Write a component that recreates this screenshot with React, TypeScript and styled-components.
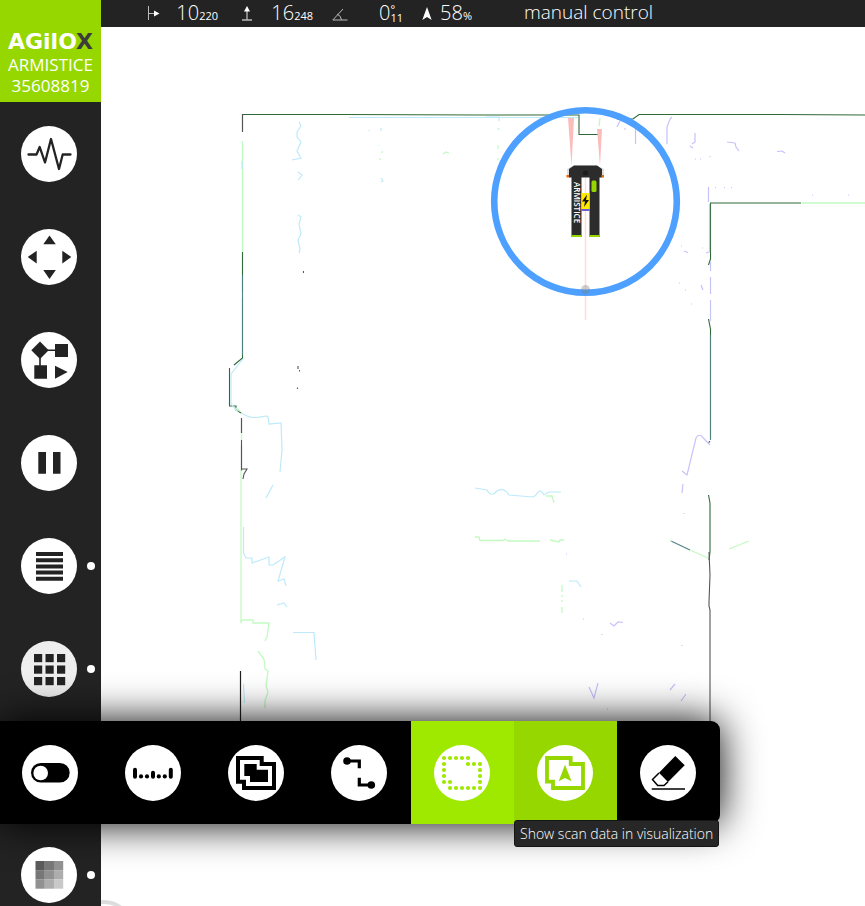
import React from "react";
import styled, { createGlobalStyle } from "styled-components";

const GlobalStyle = createGlobalStyle`
  * { box-sizing: border-box; }
  body { margin: 0; background: #fff; font-family: "Open Sans", "Noto Sans", sans-serif; }
`;

const green = "#96d700";
const dark = "#232323";

const Shell = styled.div`
  display: grid;
  grid-template-columns: 101px 1fr;
  height: 100vh;
  overflow: hidden;
`;

const Sidebar = styled.nav`
  position: relative;
  z-index: 1;
  background: ${dark};
`;

const Brand = styled.header`
  display: flex;
  flex-direction: column;
  align-items: center;
  justify-content: flex-end;
  height: 102px;
  padding-bottom: 6px;
  background: ${green};
  color: #fff;
  font-size: 17px;
  line-height: 21px;
  white-space: nowrap;
`;

const Logo = styled.div`
  font-family: "DejaVu Sans", sans-serif;
  font-weight: 700;
  font-size: 22px;
  line-height: 24px;
`;

const LogoEnd = styled.span`
  color: #3c3c3b;
`;

const Slot = styled.div`
  position: relative;
  display: flex;
  align-items: center;
  gap: 10px;
  height: 103px;
  padding-left: 21px;
`;

const RoundButton = styled.button<{ $pressed?: boolean }>`
  display: block;
  flex: none;
  width: 56px;
  height: 56px;
  padding: 0;
  border: 0;
  border-radius: 50%;
  background: ${(p) => (p.$pressed ? "#eee" : "#fff")};
  color: ${dark};
  cursor: pointer;
`;

const Dot = styled.span`
  width: 8px;
  height: 8px;
  border-radius: 50%;
  background: #fff;
`;

const Flyout = styled.div`
  position: absolute;
  top: 1px;
  left: -1px;
  display: flex;
  border-radius: 0 9px 9px 0;
  background: #000;
  box-shadow: 0 0 40px #000;
`;

const FlyoutItem = styled.div<{ $bg?: string }>`
  position: relative;
  display: flex;
  align-items: center;
  width: 103px;
  height: 103px;
  padding-left: 23px;
  background: ${(p) => p.$bg || "transparent"};
  ${RoundButton} { color: ${(p) => p.$bg || "#000"}; }
`;

const Tooltip = styled.div`
  position: absolute;
  top: 99px;
  left: 0;
  z-index: 2;
  padding: 3px 5px;
  border: 1px solid #151515;
  border-radius: 3px;
  background: #272727;
  color: #fff;
  font-weight: 300;
  font-size: 14px;
  line-height: 19px;
  white-space: nowrap;
`;

const Main = styled.main`
  display: flex;
  flex-direction: column;
  min-width: 0;
  min-height: 0;
`;

const StatusBar = styled.div`
  display: grid;
  grid-template-columns: 95px 95px 90px 69px 1fr;
  height: 27px;
  padding-left: 22px;
  background: ${dark};
  color: #fff;
  font-weight: 300;
  font-size: 20px;
  line-height: 26px;
  white-space: nowrap;
`;

const Reading = styled.div<{ $indent: number }>`
  display: flex;
  justify-content: space-between;
  padding-left: ${(p) => p.$indent}px;
`;

const Value = styled.div`
  display: flex;
`;

const Minor = styled.span`
  padding-top: 3px;
  font-weight: 400;
  font-size: 11px;
`;

const Degrees = styled.span`
  display: flex;
  flex-direction: column;
  font-weight: 400;
  font-size: 11px;
  line-height: 9px;
  padding-top: 4px;
`;

const Mode = styled.div`
  padding-left: 52px;
  font-size: 19px;
  line-height: 25px;
`;

const MapCanvas = styled.svg`
  display: block;
  flex: 1;
  width: 100%;
  min-height: 0;
  background: #fff;
`;

const Icon = ({ children }: { children: React.ReactNode }) => (
  <svg width="56" height="56" viewBox="0 0 56 56" fill="currentColor" aria-hidden="true">
    {children}
  </svg>
);

const mapOutline = "M10 13H33.7V19H46V43H16V36.7H10Z";
const dots = [
  [10, 13], [16, 13], [22, 13], [28, 13], [34, 13], [34, 19], [40, 19], [46, 19], [46, 25], [46, 31], [46, 37], [46, 43],
  [40, 43], [34, 43], [28, 43], [22, 43], [16, 43], [16, 37], [10, 37], [10, 31], [10, 25], [10, 19],
];
const shades = ["#5a5a5a", "#777", "#919191", "#777", "#919191", "#adadad", "#919191", "#adadad", "#c9c9c9"];

const icons = {
  pulse: <path d="M7.5 28.5H15.5L18.7 21L24 36.5L30 13L38 43L41.7 28.5H49.5" fill="none" stroke="currentColor" strokeWidth="2.3" strokeLinejoin="round" strokeLinecap="round" />,
  move: <path d="M28.5 6.5L34.8 15.3H22.3ZM22.3 41H34.8L28.5 50ZM6.7 28L15.7 21.7V34.5ZM41.3 21.7V34.5L50.3 28Z" />,
  flow: (
    <>
      <path d="M19 18.3H40M19 18.3V40" stroke="currentColor" strokeWidth="1.6" />
      <path d="M19 9.6L27.7 18.3L19 27L10.3 18.3ZM34 12H47V25H34ZM13.3 33.3H26V46.7H13.3ZM34 33.7L46.7 40L34 46.7Z" />
    </>
  ),
  pause: <path d="M17.3 17H25V38.7H17.3ZM32 17H39.5V38.7H32Z" />,
  list: <path d="M15 14H42V18H15ZM15 20.2H42V24.2H15ZM15 26.4H42V30.4H15ZM15 32.6H42V36.6H15ZM15 38.8H42V42.8H15Z" />,
  grid: <>{[13, 24.5, 36].map((y) => [13, 24.5, 36].map((x) => <rect key={`${x}-${y}`} x={x} y={y} width="8.2" height="8.2" />))}</>,
  shades: <>{shades.map((c, i) => <rect key={i} x={14.5 + (i % 3) * 9.2} y={14 + Math.floor(i / 3) * 9.2} width="9.3" height="9.3" fill={c} />)}</>,
  toggle: (
    <>
      <rect x="9" y="18" width="38.7" height="19.6" rx="9.8" />
      <circle cx="18.7" cy="28" r="7.3" fill="#fff" />
    </>
  ),
  level: (
    <>
      <rect x="8" y="22.7" width="4" height="11" rx="2" />
      <rect x="26" y="25.7" width="4" height="8" rx="2" />
      <rect x="43.8" y="22.7" width="4" height="11" rx="2" />
      {[16, 22, 33.8, 39.8].map((x) => <circle key={x} cx={x} cy="31.4" r="2.1" />)}
    </>
  ),
  maps: (
    <>
      <path d={mapOutline} fill="none" stroke="currentColor" strokeWidth="4" />
      <path d="M16.3 19H28.7V24.7H40V37H22V31H16.3Z" />
    </>
  ),
  route: (
    <>
      <path d="M16 16H28.3V23.3M28.3 32.7V40H40" fill="none" stroke="currentColor" strokeWidth="3.2" />
      <circle cx="16" cy="16" r="3.8" />
      <circle cx="40.3" cy="40" r="3.8" />
    </>
  ),
  scan: <>{dots.map(([x, y]) => <circle key={`${x}-${y}`} cx={x} cy={y} r="2.1" />)}</>,
  navMap: (
    <>
      <path d={mapOutline} fill="none" stroke="currentColor" strokeWidth="3.8" />
      <path d="M28 19.7L34.5 36.3L28 33L21.7 36.3Z" />
    </>
  ),
  eraser: (
    <>
      <path d="M35.3 11L44.7 20.3L28 37L19 27.7Z" />
      <path d="M19 28L12.5 34.5L17.7 40.5H24L28 36.7M11.7 44H45" fill="none" stroke="currentColor" strokeWidth="1.5" />
    </>
  ),
};

type IconName = keyof typeof icons;

const SideItem = ({ icon, label, more, pressed }: { icon: IconName; label: string; more?: boolean; pressed?: boolean }) => (
  <Slot>
    <RoundButton aria-label={label} $pressed={pressed}><Icon>{icons[icon]}</Icon></RoundButton>
    {more && <Dot />}
  </Slot>
);

const flyoutItems: { icon: IconName; label: string; bg?: string; tip?: string }[] = [
  { icon: "toggle", label: "Toggle" },
  { icon: "level", label: "Scale" },
  { icon: "maps", label: "Maps" },
  { icon: "route", label: "Routes" },
  { icon: "scan", label: "Scan outline", bg: "#9fe800" },
  { icon: "navMap", label: "Scan data", bg: green, tip: "Show scan data in visualization" },
  { icon: "eraser", label: "Erase" },
];

const traces: { color: string; width: number; d: string }[] = [
  {
    color: "#2f6a38", width: 1.1,
    d: "M242.500 132V114.500H345L480 115H579V134.500H598L601 132M617 119H633L639 114.500H780L865 115M242.500 252V292M242.500 298V358L234 365M229.500 368V406H236V410L241 413M801 203H710.500V259L708.500 265M710 441L708.500 443M708.500 319L710.500 329V438M708.500 495L710 503V552L709 560M241.500 418V433M241.500 445V470",
  },
  { color: "#555", width: 1.1, d: "M242.500 114V132M241.500 418V433M241.500 440V471M241 469H247L244 474L243 479M709 552L710 575L709 602V606L710 610V722M303.500 271V273M298 366V369M299.500 370V371.500M297.500 387.500V389M601 132L599 135" },
  { color: "#202020", width: 1.2, d: "M240.500 671V722" },
  { color: "#4f8482", width: 1.1, d: "M710.500 335V440M671 541L690 550M242.500 275V355" },
  {
    color: "#c2fac2", width: 1.3,
    d: "M242.500 141V252M802 203H865M241 470V622L243 620H253V623H269L267 637L265 641M258 651L264 659L265 669L268 671L266 686L268 692L265 701V708M241.500 433V440M475 537H479L480 540.500H503L505 539L508 541H540M550 540L559 542L560 540H564M546 496H552L554 503M562 585V592M562 595V597M562 600V602M562 607V613M690 550L708 558M729 549L749 541M443 154L446 152L449 153M379 145V145.500M382 151V153M380 158V160M498 145V149M498 158V160M600 118L599 126M670 540L672 541M236 408L240 411",
  },
  {
    color: "#bdeafb", width: 1.2,
    d: "M349 117.500H578M299 122L301 126L297 132V137L301 142L297 151L301 158L292 160M298 172L302 175L298 180M298 215L301 217L299 224L301 234L298 240L300 249L299 253M242 161V169M243 359L231 374V404L238 412M241 413L247 416Q253 419 266 416L268 417L269 424L281 423L282 450L280 472M273 485L266 498M243.500 527V553L246 558H252V563L269 557V565H273L285 557L278 581L284 579L286 586M277 605L284 603L287 607M293 632.500H314L316 660M243.500 684L244.500 703M475 488L487 490Q491 498 497 491Q504 487 509 495L533 497Q536 496 538 492Q541 489 544 495L549 492L561 492M569 581H577L581 587M381 178L383 181L381 182M381 128V131M369 130V131M497 129H500M486 117H499V121",
  },
  {
    color: "#c6c2fa", width: 1.2,
    d: "M635.500 121V144M667 144V127L670 119L672 117M695 133V142L692 144M690 146L693 148M727 142L735 143L736 147L739 151M777 151.500L782 151L785 153M695 159H696M700 159H701M710 156V157M708.500 187V202M715 187.500H716M724 187.500H725M731 187.500H732M812 195H813M848 195H849M709.500 204V252M710.500 262V271M710.500 277V294M710.500 300V321M681 246H682M684 251L688 252.500M702 248H703M706 253L709 252M679 283H680M685 290H686M701 285L703 290M691 304H692M710 445L701 435.500H698L696 438L687 475L682 471M683 484L682 493M684 513V514M610 623L614 626L618 622L623 622.500M602 634V635M682 645V646M583 619H584M589 687L594 698L598 683M670 690L675 684M681 701L686 694M617 127L620 121M624 129H626M566 554H567M607 709H608",
  },
];

const FieldMap = () => (
  <MapCanvas role="img" aria-label="Scan map with vehicle position">
    <g transform="translate(-101 -27)">
      {traces.map((t) => <path key={t.color} d={t.d} fill="none" stroke={t.color} strokeWidth={t.width} />)}
      <path d="M568 118H574L571.500 166ZM597 129H602L600 166Z" fill="#fbbcbc" />
      <path d="M585.500 178V320" stroke="#ff9a9a" strokeOpacity="0.35" strokeWidth="1.5" />
      <circle cx="585.5" cy="201.500" r="91.300" fill="none" stroke="#4da0ff" strokeWidth="6.600" />
      <circle cx="585.5" cy="289.500" r="4.500" fill="#777" fillOpacity="0.35" />
      <g>
        <path d="M567 169L574 165.500H597L604 169V177H567Z" fill="#ddd" />
        <path d="M569 169L574 165.500H597L602 169V177.500H599.500V237H589.500V177.500H581.500V237H571.500V177.500H569Z" fill="#2c2c2c" />
        <path d="M566.500 175H569V177.500H566.500ZM601.500 175H604V177.500H601.500Z" fill="#e36a10" />
        <path d="M571.500 235H581.500V237H571.500ZM589.500 235H599.500V237H589.500Z" fill={green} />
        <rect x="591.500" y="180.500" width="5" height="11.500" rx="1.500" fill={green} />
        <rect x="581.500" y="193" width="8" height="16" fill="#ffea00" />
        <path d="M587 194.500L582 201.500H585L584 207L589 200H586Z" fill="#111" />
        <path d="M581.500 210H589.500" stroke="#5a4ed0" strokeWidth="1.800" />
        <circle cx="585.5" cy="173" r="2.500" fill="#1c1c1c" />
        <text transform="translate(574 182) rotate(90)" fontFamily='"Open Sans", sans-serif' fontSize="8" fontWeight="600" fill="#fff">ARMISTICE</text>
      </g>
      <circle cx="104" cy="930" r="28" fill="none" stroke="#ddd" strokeWidth="4" />
    </g>
  </MapCanvas>
);

export default function App() {
  return (
    <Shell>
      <GlobalStyle />
      <Sidebar>
        <Brand>
          <Logo>AGilO<LogoEnd>X</LogoEnd></Logo>
          <span>ARMISTICE</span>
          <span>35608819</span>
        </Brand>
        <SideItem icon="pulse" label="Status" />
        <SideItem icon="move" label="Move" />
        <SideItem icon="flow" label="Workflow" />
        <SideItem icon="pause" label="Pause" />
        <SideItem icon="list" label="List" more />
        <SideItem icon="grid" label="Views" more pressed />
        <Slot>
          <Flyout>
            {flyoutItems.map((f) => (
              <FlyoutItem key={f.icon} $bg={f.bg}>
                <RoundButton aria-label={f.label}><Icon>{icons[f.icon]}</Icon></RoundButton>
                {f.tip && <Tooltip role="tooltip">{f.tip}</Tooltip>}
              </FlyoutItem>
            ))}
          </Flyout>
        </Slot>
        <SideItem icon="shades" label="Shades" more />
      </Sidebar>
      <Main>
        <StatusBar>
          <Reading $indent={25}>
            <svg width="12" height="27" viewBox="0 0 12 27" fill="none" stroke="#bbb">
              <path d="M.5 6V20M1 13.500H8" />
              <path d="M6 10.500L11.500 13.500L6 16.500Z" fill="#fff" stroke="none" />
            </svg>
            <Value>10<Minor>220</Minor></Value>
          </Reading>
          <Reading $indent={24}>
            <svg width="10" height="27" viewBox="0 0 10 27" fill="none" stroke="#bbb">
              <path d="M0 20H10M5 20V10" strokeWidth="1.300" />
              <path d="M2 11.500L5 6L8 11.500Z" fill="#fff" stroke="none" />
            </svg>
            <Value>16<Minor>248</Minor></Value>
          </Reading>
          <Reading $indent={19}>
            <svg width="16" height="27" viewBox="0 0 16 27" fill="none" stroke="#bbb">
              <path d="M11 9L.8 20H15.500M5 14Q9 15.500 9.500 20" />
            </svg>
            <Value>0<Degrees><span>°</span><span>11</span></Degrees></Value>
          </Reading>
          <Reading $indent={19}>
            <svg width="10" height="27" viewBox="0 0 10 27" fill="#fff">
              <path d="M5 7L9.700 20L5 17L.3 20Z" />
            </svg>
            <Value>58<Minor>%</Minor></Value>
          </Reading>
          <Mode>manual control</Mode>
        </StatusBar>
        <FieldMap />
      </Main>
    </Shell>
  );
}
